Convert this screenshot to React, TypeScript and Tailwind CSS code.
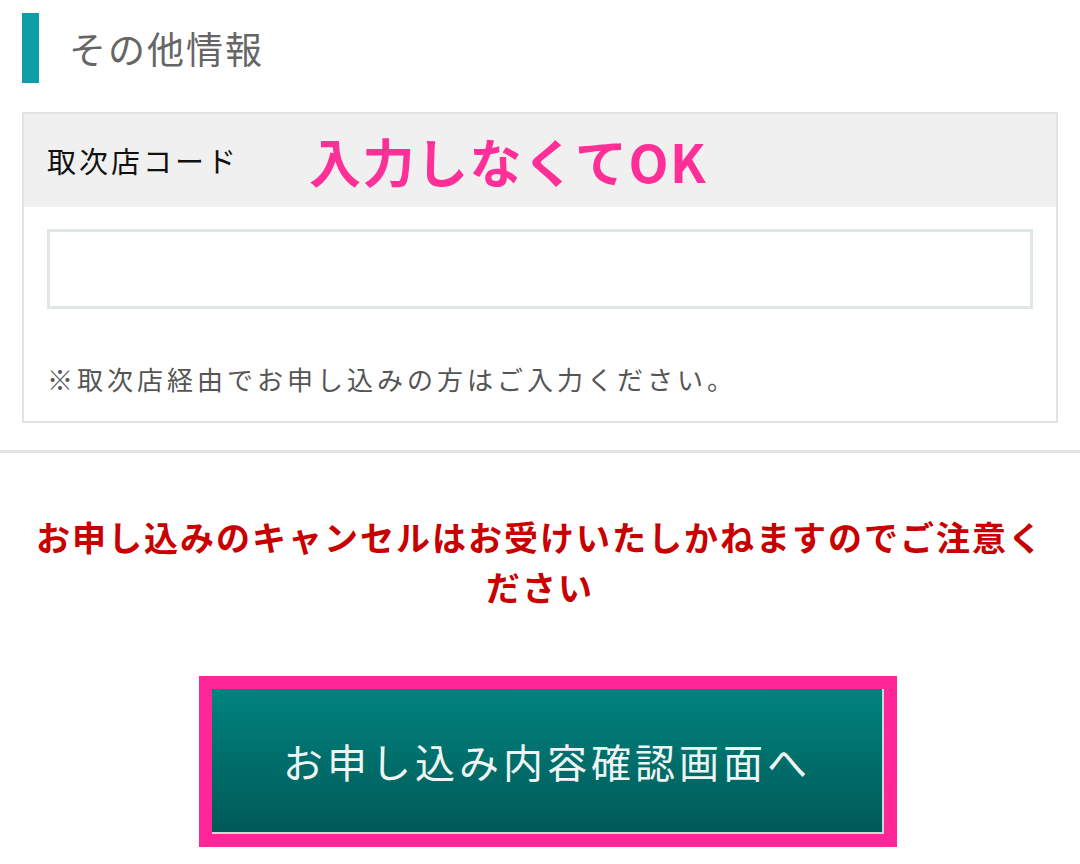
export default function App() {
  return (
    <div
      className="w-[1080px] h-[864px] bg-white overflow-hidden"
      style={{ fontFamily: '"Noto Sans CJK JP", "Noto Sans", sans-serif' }}
    >
      {/* 見出し */}
      <div className="flex items-center h-[70px] mt-[13px] ml-[22px]">
        <div className="w-[17px] h-[70px] bg-[#0e9fa6]" />
        <h2 className="ml-[30px] text-[37px] leading-none text-[#666666] tracking-[2px]">その他情報</h2>
      </div>

      {/* 取次店コード */}
      <div className="mt-[29px] mx-[22px] border-2 border-[#e2e2e2] h-[311px] flex flex-col">
        <div className="h-[93px] bg-[#f0f0f0] flex items-center pl-[23px]">
          <span className="text-[29px] text-[#111] tracking-[3px]">取次店コード</span>
          <span className="ml-[70px] text-[52px] font-bold text-[#ff2f98] tracking-[1.5px] leading-none">
            入力しなくてOK
          </span>
        </div>
        <div className="px-[23px] pt-[22px]">
          <input
            type="text"
            className="w-full h-[80px] border-[3px] border-[#dfe7e7] bg-white outline-none"
          />
          <p className="mt-[50px] text-[26px] text-[#555] tracking-[4px]">
            ※取次店経由でお申し込みの方はご入力ください。
          </p>
        </div>
      </div>

      <div className="mt-[27px] h-[3px] bg-[#e4e4e4]" />

      <p className="mt-[59px] text-center text-[34px] font-bold leading-[50px] text-[#c80000] tracking-[2px] px-[30px]">
        お申し込みのキャンセルはお受けいたしかねますのでご注意ください
      </p>

      {/* ボタン */}
      <div className="mt-[64px] flex justify-center">
        <div className="ml-[16px] border-[13px] border-[#ff2797]">
          <button className="w-[672px] h-[145px] bg-gradient-to-b from-[#00837f] to-[#005a58] text-[#eef6f5] text-[40px] tracking-[4px] border-r-2 border-b-2 border-[#cfd8d8]">
            お申し込み内容確認画面へ
          </button>
        </div>
      </div>
    </div>
  );
}
